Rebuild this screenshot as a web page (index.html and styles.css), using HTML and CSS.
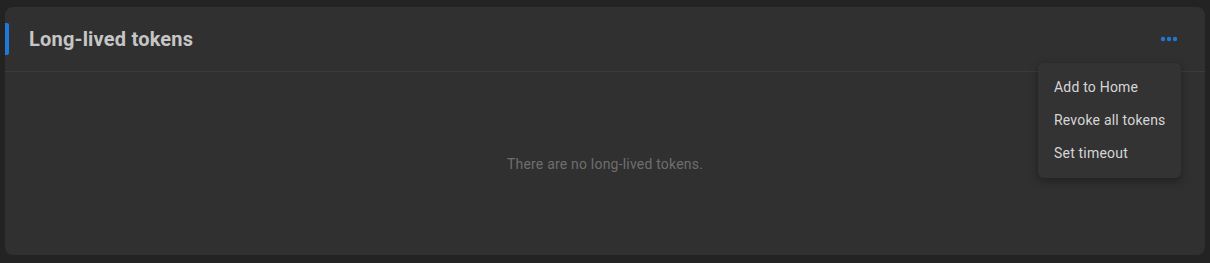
FILE: index.html
```html
<!DOCTYPE html>
<html lang="en">
<head>
<meta charset="utf-8">
<title>Long-lived tokens</title>
<link rel="stylesheet" href="styles.css">
</head>
<body>
<div class="card">
  <div class="card-header">
    <span class="accent"></span>
    <h2 class="title">Long-lived tokens</h2>
    <button class="more" aria-label="More">
      <svg width="18" height="6" viewBox="0 0 18 6"><circle cx="3" cy="3" r="2.2"/><circle cx="9" cy="3" r="2.2"/><circle cx="15" cy="3" r="2.2"/></svg>
    </button>
  </div>
  <div class="card-body">
    <p class="empty">There are no long-lived tokens.</p>
  </div>
  <ul class="menu">
    <li>Add to Home</li>
    <li>Revoke all tokens</li>
    <li>Set timeout</li>
  </ul>
</div>
</body>
</html>
```
FILE: styles.css
```css
html, body { margin: 0; padding: 0; }
body {
  background: #232323;
  font-family: Roboto, "Liberation Sans", sans-serif;
  padding: 7px 5px 0 5px;
  height: 263px;
  box-sizing: border-box;
}
.card {
  position: relative;
  background: #303030;
  border-radius: 8px;
  height: 248px;
  display: flex;
  flex-direction: column;
}
.card-header {
  position: relative;
  height: 64px;
  display: flex;
  align-items: center;
  border-bottom: 1px solid #3b3b3b;
  padding: 0 24px;
}
.accent {
  position: absolute;
  left: 0;
  top: 16px;
  width: 4px;
  height: 32px;
  background: #1e7ad6;
  border-radius: 0 2px 2px 0;
}
.title {
  margin: 0;
  font-size: 20px;
  font-weight: 700;
  letter-spacing: 0.2px;
  color: #c6c6c6;
  flex: 1;
}
.more {
  background: none;
  border: 0;
  padding: 0;
  margin-right: 3px;
  display: flex;
  fill: #1f78d1;
}
.card-body {
  flex: 1;
  display: flex;
  align-items: center;
  justify-content: center;
}
.empty {
  margin: 0;
  font-size: 14px;
  letter-spacing: 0.2px;
  color: #6e6e6e;
}
.menu {
  position: absolute;
  top: 56px;
  right: 24px;
  width: 143px;
  margin: 0;
  padding: 8px 0;
  list-style: none;
  background: #333333;
  border-radius: 6px;
  box-shadow: 0 3px 10px rgba(0,0,0,0.35);
}
.menu li {
  height: 33px;
  line-height: 33px;
  padding-left: 16px;
  font-size: 14px;
  letter-spacing: 0.2px;
  color: #d6d6d6;
}
```
